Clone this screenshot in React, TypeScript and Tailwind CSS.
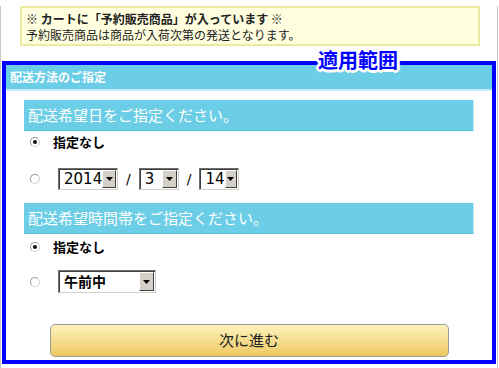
const jp = "font-['Noto_Sans_CJK_JP','Noto_Sans',sans-serif]";

function Radio({ checked }: { checked?: boolean }) {
  return (
    <span className="flex h-[10px] w-[10px] shrink-0 items-center justify-center rounded-full border border-[#9a9a9a] border-b-[#d0d0d0] border-r-[#d0d0d0] bg-white">
      {checked && <span className="h-[4px] w-[4px] rounded-full bg-[#111]" />}
    </span>
  );
}

function Select({ label, className, cjk }: { label: string; className: string; cjk?: boolean }) {
  return (
    <div
      className={`flex h-[22px] items-stretch border border-b-[#d4d0c8] border-l-[#6e6e6e] border-r-[#d4d0c8] border-t-[#6e6e6e] bg-white shadow-[inset_1px_1px_0_#404040] ${className}`}
    >
      <span
        className={`flex flex-1 items-center pl-[5px] text-black ${
          cjk ? `${jp} text-[14px] font-bold` : "font-['DejaVu_Sans',sans-serif] text-[15px]"
        }`}
      >
        {label}
      </span>
      <span className="my-[1px] mr-[1px] flex w-[15px] items-center justify-center border border-b-[#404040] border-l-white border-r-[#404040] border-t-white bg-[#d4d0c8]">
        <svg width="7" height="4" viewBox="0 0 7 4">
          <path d="M0 0h7L3.5 4z" fill="#000" />
        </svg>
      </span>
    </div>
  );
}

function SubHead({ children }: { children: string }) {
  return (
    <div className={`flex h-[31px] items-center border-b border-r border-b-[#4fc0de] border-r-[#bfeaf6] bg-[#6bcde6] pl-[4px] text-[15px] text-white ${jp}`}>
      {children}
    </div>
  );
}

export default function App() {
  return (
    <div className="h-[368px] w-[499px] bg-white">
      <div className="h-[368px] w-[498px] border-x border-[#c8c8c8]">
        <div className={`ml-[19px] mt-[6px] h-[40px] w-[460px] border-2 border-[#ecea9e] bg-[#ffffdf] pl-[4px] pt-[3px] text-[12px] leading-[16px] text-[#222] ${jp}`}>
          <p className="font-bold">※ カートに「予約販売商品」が入っています ※</p>
          <p>予約販売商品は商品が入荷次第の発送となります。</p>
        </div>

        <div className="relative mx-[1px] mt-[15px] border-4 border-[#0000ff] pb-[3px]">
          <span
            className={`absolute left-[312px] top-[-16px] text-[20px] font-bold leading-[22px] text-[#0000ff] ${jp} [text-shadow:2px_0_0_#fff,-2px_0_0_#fff,0_2px_0_#fff,0_-2px_0_#fff,2px_2px_0_#fff,-2px_-2px_0_#fff,2px_-2px_0_#fff,-2px_2px_0_#fff,3px_0_0_#fff,-3px_0_0_#fff,0_3px_0_#fff,0_-3px_0_#fff]`}
          >
            適用範囲
          </span>

          <div className={`flex h-[26px] items-center border-b-2 border-[#c4edf8] bg-[#6bcde6] pl-[4px] text-[12px] font-bold text-white ${jp}`}>
            配送方法のご指定
          </div>

          <div className="px-[18px] pt-[9px]">
            <SubHead>配送希望日をご指定ください。</SubHead>
            <div className="flex h-[22px] items-center pl-[6px]">
              <Radio checked />
              <span className={`ml-[13px] text-[13px] font-bold text-black ${jp}`}>指定なし</span>
            </div>
            <div className="mt-[15px] flex items-center pl-[6px]">
              <Radio />
              <Select label="2014" className="ml-[18px] w-[60px]" />
              <span className="mx-[8px] font-['DejaVu_Sans',sans-serif] text-[14px] text-black">/</span>
              <Select label="3" className="w-[40px]" />
              <span className="mx-[8px] font-['DejaVu_Sans',sans-serif] text-[14px] text-black">/</span>
              <Select label="14" className="w-[40px]" />
            </div>

            <div className="mt-[13px]">
              <SubHead>配送希望時間帯をご指定ください。</SubHead>
            </div>
            <div className="mt-[2px] flex h-[22px] items-center pl-[6px]">
              <Radio checked />
              <span className={`ml-[13px] text-[13px] font-bold text-black ${jp}`}>指定なし</span>
            </div>
            <div className="mt-[12px] flex items-center pl-[6px]">
              <Radio />
              <Select label="午前中" className="ml-[18px] h-[23px] w-[98px]" cjk />
            </div>
          </div>

          <button
            type="button"
            className={`mx-auto mt-[31px] flex h-[33px] w-[399px] items-center justify-center rounded-[5px] border border-[#9a9a9a] bg-gradient-to-b from-[#fef3bc] to-[#edc85e] text-[15px] text-[#222] ${jp}`}
          >
            次に進む
          </button>
        </div>
      </div>
    </div>
  );
}
